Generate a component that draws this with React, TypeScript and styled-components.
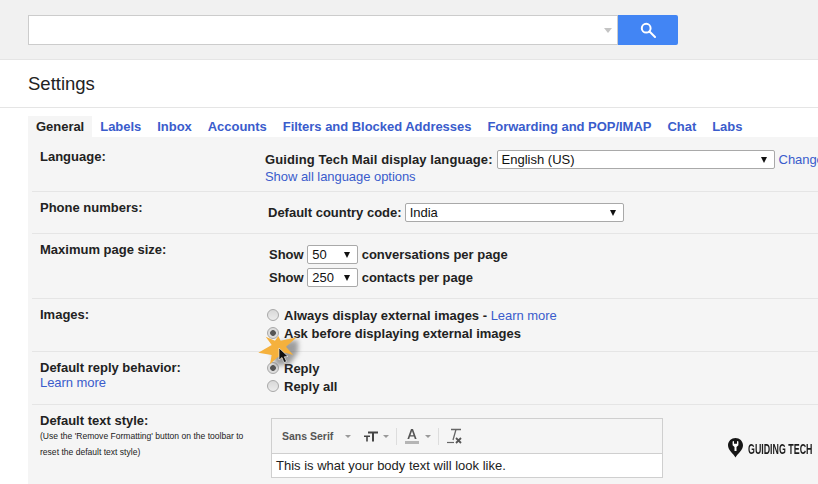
import styled, { createGlobalStyle } from 'styled-components';

const GlobalStyle = createGlobalStyle`
  html, body {
    margin: 0;
    padding: 0;
    width: 818px;
    height: 484px;
    overflow: hidden;
    background: #fff;
  }
  body {
    font-family: "Liberation Sans", Arial, sans-serif;
    font-size: 13px;
    color: #222;
  }
`;

const Page = styled.div`
  position: relative;
  width: 818px;
  height: 484px;
  overflow: hidden;
`;

const TopBar = styled.div`
  height: 44px;
  background: #f1f1f1;
  border-bottom: 1px solid #e5e5e5;
  padding: 15px 0 0 28px;
  display: flex;
`;

const SearchBox = styled.div`
  width: 590px;
  height: 30px;
  box-sizing: border-box;
  background: #fff;
  border: 1px solid #ccc;
  display: flex;
  align-items: center;
  justify-content: flex-end;
  padding-right: 5px;
`;

const SearchCaret = styled.div`
  width: 0;
  height: 0;
  border-left: 4px solid transparent;
  border-right: 4px solid transparent;
  border-top: 5px solid #c4c4c4;
  margin-top: 1px;
`;

const SearchButton = styled.div`
  width: 60px;
  height: 30px;
  background: #4285f4;
  border-radius: 0 2px 2px 0;
  display: flex;
  align-items: center;
  justify-content: center;
`;

const TitleBar = styled.div`
  height: 47px;
  border-bottom: 1px solid #e5e5e5;
  padding-left: 28px;
  display: flex;
  align-items: center;
`;

const Title = styled.h1`
  margin: 1px 0 0;
  font-size: 18.5px;
  font-weight: 400;
  color: #222;
`;

const Tabs = styled.div`
  display: flex;
  padding: 8px 0 0 28px;
  height: 21px;
`;

const Tab = styled.div<{ $active?: boolean }>`
  height: 21px;
  line-height: 22px;
  font-weight: 700;
  font-size: 13px;
  letter-spacing: -0.03px;
  white-space: nowrap;
  padding: 0 8px;
  color: ${({ $active }) => ($active ? '#222' : '#3a5ccc')};
  background: ${({ $active }) => ($active ? '#f5f5f5' : 'transparent')};
`;

const Panel = styled.div`
  margin-left: 28px;
  background: #f5f5f5;
  padding-left: 4px;
  width: 800px;
`;

const Row = styled.div<{ $height: number }>`
  display: flex;
  height: ${({ $height }) => $height}px;
  border-bottom: 1px solid #e5e5e5;
  padding-left: 8px;
  &:last-child {
    border-bottom: none;
  }
`;

const Label = styled.div<{ $top: number }>`
  width: 225px;
  flex: none;
  padding-top: ${({ $top }) => $top}px;
  font-weight: 700;
  line-height: 15px;
`;

const Hint = styled.div`
  font-weight: 400;
  font-size: 8.55px;
  line-height: 16px;
  color: #222;
  margin-top: 0;
  white-space: nowrap;
`;

const Content = styled.div<{ $top: number; $left?: number }>`
  display: flex;
  flex-direction: column;
  padding: ${({ $top }) => $top}px 0 0 ${({ $left }) => $left ?? 0}px;
  white-space: nowrap;
`;

const Line = styled.div<{ $gap?: number; $mb?: number; $spacing?: number }>`
  display: flex;
  align-items: center;
  gap: ${({ $gap }) => $gap ?? 4}px;
  font-weight: 700;
  letter-spacing: ${({ $spacing }) => $spacing ?? 0}px;
  margin-bottom: ${({ $mb }) => $mb ?? 0}px;
`;

const Link = styled.a`
  color: #3a5ccc;
  font-weight: 400;
  letter-spacing: -0.05px;
`;

const Select = styled.div<{ $width: number }>`
  width: ${({ $width }) => $width}px;
  height: 19px;
  box-sizing: border-box;
  background: #fff;
  border: 1px solid #a9a9a9;
  border-radius: 2px;
  padding: 0 5px 0 4px;
  display: flex;
  align-items: center;
  justify-content: space-between;
  font-weight: 400;
  font-size: 13px;
  letter-spacing: 0;
  color: #111;
`;

const SelectArrow = styled.span`
  width: 0;
  height: 0;
  border-left: 3.5px solid transparent;
  border-right: 3.5px solid transparent;
  border-top: 6px solid #111;
  margin-right: 2px;
`;

const RadioLine = styled.div`
  display: flex;
  align-items: center;
  gap: 5px;
  height: 18px;
  font-weight: 700;
`;

const Radio = styled.span<{ $checked?: boolean }>`
  width: 12px;
  height: 12px;
  border-radius: 50%;
  box-sizing: border-box;
  border: 1px solid #a8a8a8;
  background: ${({ $checked }) =>
    $checked
      ? 'radial-gradient(circle, #555 0 2.5px, #dcdcdc 3.2px)'
      : 'linear-gradient(#d8d8d8, #ececec)'};
`;

const Editor = styled.div`
  width: 392px;
  border: 1px solid #cfcfcf;
  box-sizing: border-box;
`;

const EditorToolbar = styled.div`
  height: 34px;
  display: flex;
  align-items: center;
  padding-left: 10px;
  border-bottom: 1px solid #cfcfcf;
  color: #444;
`;

const FontName = styled.span`
  font-size: 10.5px;
  font-weight: 700;
  color: #555;
  width: 63px;
`;

const MiniCaret = styled.span<{ $ml?: number; $mr?: number }>`
  width: 0;
  height: 0;
  border-left: 3px solid transparent;
  border-right: 3px solid transparent;
  border-top: 3px solid #999;
  margin-left: ${({ $ml }) => $ml ?? 0}px;
  margin-right: ${({ $mr }) => $mr ?? 0}px;
`;

const ToolDivider = styled.span`
  width: 1px;
  height: 17px;
  background: #ddd;
`;

const ToolIcon = styled.svg`
  margin-left: 8px;
`;

const EditorBody = styled.div`
  height: 23px;
  background: #fff;
  display: flex;
  align-items: center;
  padding-left: 4px;
  font-size: 13px;
  color: #222;
  font-weight: 400;
`;

const Logo = styled.div`
  position: absolute;
  left: 728px;
  top: 438px;
  width: 86px;
  display: flex;
  align-items: center;
  gap: 5px;
`;

const LogoText = styled.span`
  font-weight: 700;
  font-size: 15px;
  color: #1c1c1c;
  display: inline-block;
  width: 66px;
  transform: scaleX(0.59);
  transform-origin: left center;
  white-space: nowrap;
`;

const Pointer = styled.svg`
  position: absolute;
  left: 254px;
  top: 330px;
`;

const tabNames = [
  'Labels',
  'Inbox',
  'Accounts',
  'Filters and Blocked Addresses',
  'Forwarding and POP/IMAP',
  'Chat',
  'Labs',
];

export default function App() {
  return (
    <Page>
      <GlobalStyle />
      <TopBar>
        <SearchBox>
          <SearchCaret />
        </SearchBox>
        <SearchButton>
          <svg width="16" height="16" viewBox="0 0 16 16" fill="none" stroke="#fff" strokeWidth="2">
            <circle cx="6.2" cy="6.2" r="4.4" />
            <path d="M9.5 9.5 L15 15" strokeLinecap="round" />
          </svg>
        </SearchButton>
      </TopBar>

      <TitleBar>
        <Title>Settings</Title>
      </TitleBar>

      <Tabs>
        <Tab $active>General</Tab>
        {tabNames.map((name) => (
          <Tab key={name}>{name}</Tab>
        ))}
      </Tabs>

      <Panel>
        <Row $height={54}>
          <Label $top={12}>Language:</Label>
          <Content $top={13}>
            <Line $gap={4} $spacing={0.09}>
              Guiding Tech Mail display language:
              <Select $width={278}>
                English (US)
                <SelectArrow />
              </Select>
              <Link>Change language settings for other Google products</Link>
            </Line>
            <Link>Show all language options</Link>
          </Content>
        </Row>
        <Row $height={41}>
          <Label $top={8}>Phone numbers:</Label>
          <Content $top={11} $left={3}>
            <Line $gap={3}>
              Default country code:
              <Select $width={219}>
                India
                <SelectArrow />
              </Select>
            </Line>
          </Content>
        </Row>
        <Row $height={64}>
          <Label $top={8}>Maximum page size:</Label>
          <Content $top={11} $left={4}>
            <Line $mb={4} $gap={3.5}>
              Show
              <Select $width={51}>
                50
                <SelectArrow />
              </Select>
              conversations per page
            </Line>
            <Line $gap={3.5}>
              Show
              <Select $width={51}>
                250
                <SelectArrow />
              </Select>
              contacts per page
            </Line>
          </Content>
        </Row>
        <Row $height={52}>
          <Label $top={8}>Images:</Label>
          <Content $top={7} $left={2}>
            <RadioLine>
              <Radio />
              <span>
                Always display external images - <Link>Learn more</Link>
              </span>
            </RadioLine>
            <RadioLine>
              <Radio $checked />
              Ask before displaying external images
            </RadioLine>
          </Content>
        </Row>
        <Row $height={52}>
          <Label $top={8}>
            Default reply behavior:
            <br />
            <Link>Learn more</Link>
          </Label>
          <Content $top={7} $left={2}>
            <RadioLine>
              <Radio $checked />
              Reply
            </RadioLine>
            <RadioLine>
              <Radio />
              Reply all
            </RadioLine>
          </Content>
        </Row>
        <Row $height={79}>
          <Label $top={8}>
            Default text style:
            <Hint>
              (Use the 'Remove Formatting' button on the toolbar to
              <br />
              reset the default text style)
            </Hint>
          </Label>
          <Content $top={13} $left={6}>
            <Editor>
              <EditorToolbar>
                <FontName>Sans Serif</FontName>
                <MiniCaret $mr={13} />
                <svg width="14" height="11" viewBox="0 0 14 11" fill="#444">
                  <path d="M4 0.5h10v2h-4v8H8v-8H4z" />
                  <path d="M0 4.5h6v1.5H3.8v4.5H2.2V6H0z" />
                </svg>
                <MiniCaret $ml={5} $mr={7} />
                <ToolDivider />
                <ToolIcon width="14" height="16" viewBox="0 0 14 16">
                  <path d="M6 1h2l3.6 10H9.8L9 8.6H5L4.2 11H2.4zM5.5 7.2h3L7 3z" fill="#555" />
                  <rect x="0" y="13" width="14" height="3" fill="#b5b5b5" />
                </ToolIcon>
                <MiniCaret $ml={6} $mr={7} />
                <ToolDivider />
                <ToolIcon width="15" height="16" viewBox="0 0 15 16">
                  <path d="M4 1.5h10M9 1.5 L6 12" stroke="#666" strokeWidth="1.3" fill="none" />
                  <path d="M0 14.5h7" stroke="#666" strokeWidth="1.2" />
                  <path d="M9 10l5 5M14 10l-5 5" stroke="#555" strokeWidth="1.8" />
                </ToolIcon>
              </EditorToolbar>
              <EditorBody>This is what your body text will look like.</EditorBody>
            </Editor>
          </Content>
        </Row>
      </Panel>

      <Logo>
        <svg width="15" height="20" viewBox="0 0 15 20">
          <path d="M7.5 0C3.4 0 0 3.2 0 7.3c0 4.8 5.3 8.4 7.5 12.2C9.7 15.7 15 12.1 15 7.3 15 3.2 11.6 0 7.5 0z" fill="#161616" />
          <path d="M4.6 3.6v3.6l1.9 1.7V13h2V8.9l1.9-1.7V3.6L9 3v2.8H6V3z" fill="#fff" />
        </svg>
        <LogoText>GUIDING TECH</LogoText>
      </Logo>

      <Pointer width="50" height="50" viewBox="0 0 50 50">
        <defs>
          <filter id="blur" x="-30%" y="-30%" width="160%" height="160%">
            <feGaussianBlur stdDeviation="2.5" />
          </filter>
        </defs>
        <path
          d="M18 22 L26 12 L44 10 L44 22 L36 34 L22 36 Z"
          fill="#555"
          opacity="0.55"
          filter="url(#blur)"
        />
        <path
          d="M4.3 22.7 L17.7 15 L11.7 6.7 L21 10.7 L24.3 6 L26.7 10.7 L42.7 7.3 L32 16.7 L39.3 25 L31 22.7 L29.3 29.3 L24.3 26.7 L16 34 L17.7 25 Z"
          fill="#f5b13d"
        />
        <path
          d="M25 18 L25 30 L28 27.5 L30 32.5 L32.5 31.5 L30.3 26.8 L34 26.5 Z"
          fill="#111"
          stroke="#fff"
          strokeWidth="0.6"
        />
      </Pointer>
    </Page>
  );
}
